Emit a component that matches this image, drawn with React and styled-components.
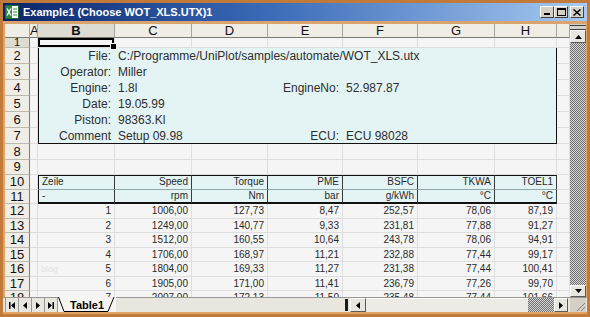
import React from "react";
import styled, { createGlobalStyle } from "styled-components";

const COLS = "25px 8px 77px 77px 76px 75px 75px 77px 62px 13px";
const FONT = `"Liberation Sans", Arial, sans-serif`;

const GlobalStyle = createGlobalStyle`
  body {
    margin: 0;
    background: #ffffff;
    font-family: ${FONT};
  }
`;

const Window = styled.div`
  width: 590px;
  height: 317px;
  box-sizing: border-box;
  border: 3px solid #c27a3a;
  background: #e0a466;
  display: flex;
  flex-direction: column;
  overflow: hidden;
`;

const TitleBar = styled.div`
  height: 18px;
  flex: none;
  display: flex;
  align-items: center;
  padding: 0 3px 0 2px;
  background: linear-gradient(90deg, #0a246a 0%, #3a6ab8 45%, #a6caf0 100%);
`;

const Title = styled.div`
  flex: 1;
  margin-left: 4px;
  color: #ffffff;
  font: bold 11px ${FONT};
  white-space: nowrap;
`;

const WinButton = styled.div`
  width: 14px;
  height: 12px;
  box-sizing: border-box;
  margin-left: ${(p) => p.$gap || 0}px;
  background: #d4d0c8;
  border: 1px solid;
  border-color: #ffffff #404040 #404040 #ffffff;
  display: flex;
  align-items: center;
  justify-content: center;
`;

const FrameStrip = styled.div`
  height: 3px;
  flex: none;
  background: #d9a46e;
`;

const Main = styled.div`
  height: 273px;
  flex: none;
  display: flex;
  padding-left: 2px;
`;

const Sheet = styled.div`
  width: 565px;
  height: 273px;
  overflow: hidden;
  background: #f5f5f5;
  font-family: ${FONT};
`;

const Row = styled.div`
  display: grid;
  grid-template-columns: ${COLS};
  height: ${(p) => p.$h}px;
`;

const ColHead = styled.div`
  box-sizing: border-box;
  border-right: 1px solid #a7a49c;
  border-bottom: 1px solid #7d7a72;
  background: ${(p) => (p.$active ? "#dedbd2" : "#efede6")};
  font-size: 13px;
  font-weight: ${(p) => (p.$active ? "bold" : "normal")};
  color: #111;
  text-align: center;
  line-height: 14px;
  overflow: hidden;
`;

const RowHead = styled.div`
  box-sizing: border-box;
  border-right: 1px solid #7d7a72;
  border-bottom: 1px solid #bdbab2;
  background: ${(p) => (p.$active ? "#dedbd2" : "#efede6")};
  font-size: ${(p) => (p.$h < 12 ? 11 : 13)}px;
  color: #111;
  text-align: center;
  line-height: ${(p) => p.$h - 1}px;
  overflow: hidden;
`;

const GridCell = styled.div`
  position: relative;
  box-sizing: border-box;
  border-right: 1px solid #dedede;
  border-bottom: 1px solid #dedede;
  padding: 0 3px;
  font-size: 10px;
  color: #2a2a2a;
  text-align: ${(p) => p.$align || "right"};
  line-height: ${(p) => p.$h - 1}px;
  white-space: nowrap;
  ${(p) =>
    p.$selected &&
    `
    box-shadow: inset 0 0 0 2px #000;
    &::after {
      content: "";
      position: absolute;
      right: -3px;
      bottom: -3px;
      width: 5px;
      height: 5px;
      background: #000;
      border: 1px solid #f5f5f5;
      z-index: 2;
    }
  `}
`;

const InfoCell = styled.div`
  box-sizing: border-box;
  grid-column: span ${(p) => p.$span || 1};
  background: #e4f4f4;
  border-left: ${(p) => (p.$first ? "1px solid #111" : "none")};
  border-right: ${(p) => (p.$last ? "1px solid #111" : "none")};
  border-bottom: ${(p) => (p.$bottom ? "1px solid #111" : "none")};
  padding: 0 4px 0 3px;
  font-size: 12px;
  color: #2e2e2e;
  text-align: ${(p) => p.$align || "left"};
  line-height: ${(p) => p.$h}px;
  white-space: nowrap;
  overflow: hidden;
`;

const HeadCell = styled.div`
  box-sizing: border-box;
  background: #e4f4f4;
  border-left: ${(p) => (p.$first ? "1px solid #111" : "none")};
  border-right: 1px solid #3a3a3a;
  border-top: ${(p) => (p.$top ? "1px solid #111" : "none")};
  border-bottom: ${(p) => (p.$top ? "1px solid #8fa8a8" : "2px solid #111")};
  padding: 0 3px;
  font-size: 10px;
  color: #2a2a2a;
  text-align: ${(p) => p.$align || "right"};
  line-height: 12px;
  white-space: nowrap;
  overflow: hidden;
`;

const Watermark = styled.span`
  float: left;
  color: #e2e2e2;
  font-size: 9px;
`;

const VScroll = styled.div`
  width: 16px;
  display: flex;
  flex-direction: column;
  background: #d4d0c8;
`;

const SplitBox = styled.div`
  height: 5px;
  flex: none;
  border-top: 1px solid #404040;
  border-bottom: 1px solid #404040;
  box-sizing: border-box;
  margin: 1px 0 0;
`;

const ArrowBtn = styled.div`
  width: ${(p) => p.$w || 16}px;
  height: ${(p) => p.$h || 13}px;
  flex: none;
  box-sizing: border-box;
  background: #e8e6e0;
  border: 1px solid;
  border-color: #ffffff #5a5a5a #5a5a5a #ffffff;
  display: flex;
  align-items: center;
  justify-content: center;
`;

const Dither = styled.div`
  flex: ${(p) => (p.$w ? "none" : 1)};
  width: ${(p) => (p.$w ? `${p.$w}px` : "auto")};
  background: repeating-conic-gradient(#6e6e6e 0 25%, #d8d8d8 0 50%) 0 0 / 2px 2px;
`;

const BottomBar = styled.div`
  height: 15px;
  flex: none;
  display: flex;
  align-items: stretch;
  margin: 0 0 2px;
  padding-left: 2px;
  background: #e8e6df;
  border-top: 1px solid #9a9790;
  box-sizing: border-box;
`;

const NavGroup = styled.div`
  display: flex;
  border-left: 1px solid #9a9790;
`;

const NavBtn = styled.div`
  width: 13px;
  box-sizing: border-box;
  border-right: 1px solid #9a9790;
  display: flex;
  align-items: center;
  justify-content: center;
`;

const Tab = styled.div`
  position: relative;
  width: 58px;
  display: flex;
  align-items: center;
  justify-content: center;
  font: bold 11px ${FONT};
  color: #000;
  background: #f6f5f1;
  margin-top: -1px;
`;

const TabEdge = styled.svg`
  position: absolute;
  top: 0;
  left: 0;
`;

const Spacer = styled.div`
  flex: 1;
`;

const Splitter = styled.div`
  width: 3px;
  background: #1a1a1a;
  margin: 1px 2px 1px 0;
`;

const HThumb = styled.div`
  width: 162px;
  flex: none;
  background: #ecebe6;
  border-top: 1px solid #fff;
`;

const Grip = styled.div`
  width: 16px;
  margin-left: 2px;
  margin-right: 1px;
  background: #d4d0c8;
  display: flex;
  align-items: flex-end;
  justify-content: flex-end;
`;

const Tri = ({ dir }) => {
  const pts = {
    up: "0,4 7,4 3.5,0",
    down: "0,0 7,0 3.5,4",
    left: "4,0 4,7 0,3.5",
    right: "0,0 0,7 4,3.5",
  }[dir];
  const vertical = dir === "up" || dir === "down";
  return (
    <svg width={vertical ? 7 : 4} height={vertical ? 4 : 7}>
      <polygon points={pts} fill="#000" />
    </svg>
  );
};

const ExcelIcon = () => (
  <svg width="14" height="14" viewBox="0 0 14 14">
    <rect x="0.5" y="0.5" width="13" height="13" fill="#ffffff" stroke="#1f6b2d" />
    <rect x="1" y="1" width="6" height="12" fill="#2b8a3e" />
    <path d="M2 3.5 L6 10.5 M6 3.5 L2 10.5" stroke="#fff" strokeWidth="1.4" />
    <path d="M8 4h4M8 7h4M8 10h4" stroke="#2b8a3e" strokeWidth="1" />
  </svg>
);

const colLetters = ["", "A", "B", "C", "D", "E", "F", "G", "H", ""];

const info = [
  { n: 2, label: "File:", value: "C:/Programme/UniPlot/samples/automate/WOT_XLS.utx" },
  { n: 3, label: "Operator:", value: "Miller" },
  { n: 4, label: "Engine:", value: "1.8l", label2: "EngineNo:", value2: "52.987.87" },
  { n: 5, label: "Date:", value: "19.05.99" },
  { n: 6, label: "Piston:", value: "98363.Kl" },
  { n: 7, label: "Comment", value: "Setup 09.98", label2: "ECU:", value2: "ECU 98028" },
];

const heads = ["Zeile", "Speed", "Torque", "PME", "BSFC", "TKWA", "TOEL1"];
const units = ["-", "rpm", "Nm", "bar", "g/kWh", "°C", "°C"];

const data = [
  ["1", "1006,00", "127,73", "8,47", "252,57", "78,06", "87,19"],
  ["2", "1249,00", "140,77", "9,33", "231,81", "77,88", "91,27"],
  ["3", "1512,00", "160,55", "10,64", "243,78", "78,06", "94,91"],
  ["4", "1706,00", "168,97", "11,21", "232,88", "77,44", "99,17"],
  ["5", "1804,00", "169,33", "11,27", "231,38", "77,44", "100,41"],
  ["6", "1905,00", "171,00", "11,41", "236,79", "77,26", "99,70"],
  ["7", "2007,00", "172,13", "11,50", "235,48", "77,44", "101,66"],
];
const dataHeights = [15, 14, 15, 14, 15, 14, 15];

const EmptyRow = ({ n, h, selectB }) => (
  <Row $h={h}>
    <RowHead $h={h} $active={selectB}>{n}</RowHead>
    {Array.from({ length: 9 }).map((_, i) => (
      <GridCell key={i} $h={h} $selected={selectB && i === 1} />
    ))}
  </Row>
);

const InfoRow = ({ row, h, bottom }) => (
  <Row $h={h}>
    <RowHead $h={h}>{row.n}</RowHead>
    <GridCell $h={h} />
    <InfoCell $h={h} $first $bottom={bottom} $align="right">
      {row.label}
    </InfoCell>
    {row.label2 ? (
      <>
        <InfoCell $h={h} $span={2} $bottom={bottom}>{row.value}</InfoCell>
        <InfoCell $h={h} $bottom={bottom} $align="right">{row.label2}</InfoCell>
        <InfoCell $h={h} $span={3} $last $bottom={bottom}>{row.value2}</InfoCell>
      </>
    ) : (
      <InfoCell $h={h} $span={6} $last $bottom={bottom}>{row.value}</InfoCell>
    )}
    <GridCell $h={h} />
  </Row>
);

const HeadRow = ({ n, h, cells, top }) => (
  <Row $h={h}>
    <RowHead $h={h}>{n}</RowHead>
    <GridCell $h={h} />
    {cells.map((c, i) => (
      <HeadCell key={i} $first={i === 0} $top={top} $align={i === 0 ? "left" : "right"}>
        {c}
      </HeadCell>
    ))}
    <GridCell $h={h} />
  </Row>
);

const DataRow = ({ n, h, cells, mark }) => (
  <Row $h={h}>
    <RowHead $h={h}>{n}</RowHead>
    <GridCell $h={h} />
    {cells.map((c, i) => (
      <GridCell key={i} $h={h}>
        {i === 0 && mark ? <Watermark>{mark}</Watermark> : null}
        {c}
      </GridCell>
    ))}
    <GridCell $h={h} />
  </Row>
);

export default function App() {
  return (
    <>
      <GlobalStyle />
      <Window>
        <TitleBar>
          <ExcelIcon />
          <Title>Example1 (Choose WOT_XLS.UTX)1</Title>
          <WinButton>
            <svg width="6" height="6"><rect x="0" y="4" width="6" height="2" fill="#000" /></svg>
          </WinButton>
          <WinButton>
            <svg width="9" height="8">
              <rect x="0.5" y="0.5" width="8" height="7" fill="none" stroke="#000" />
              <rect x="0" y="0" width="9" height="2" fill="#000" />
            </svg>
          </WinButton>
          <WinButton $gap={2}>
            <svg width="8" height="7">
              <path d="M0.5 0.5 L7.5 6.5 M7.5 0.5 L0.5 6.5" stroke="#000" strokeWidth="1.5" />
            </svg>
          </WinButton>
        </TitleBar>
        <FrameStrip />
        <Main>
          <Sheet>
            <Row $h={14}>
              {colLetters.map((c, i) => (
                <ColHead key={i} $active={c === "B"}>{c}</ColHead>
              ))}
            </Row>
            <EmptyRow n={1} h={10} selectB />
            {info.map((r, i) => (
              <InfoRow key={r.n} row={r} h={16} bottom={i === info.length - 1} />
            ))}
            <EmptyRow n={8} h={16} />
            <EmptyRow n={9} h={15} />
            <HeadRow n={10} h={15} cells={heads} top />
            <HeadRow n={11} h={14} cells={units} />
            {data.map((r, i) => (
              <DataRow
                key={i}
                n={12 + i}
                h={dataHeights[i]}
                cells={r}
                mark={i === 4 ? "blog" : null}
              />
            ))}
          </Sheet>
          <VScroll>
            <SplitBox />
            <ArrowBtn><Tri dir="up" /></ArrowBtn>
            <Dither />
            <ArrowBtn $h={12}><Tri dir="down" /></ArrowBtn>
          </VScroll>
        </Main>
        <BottomBar>
          <NavGroup>
            <NavBtn>
              <svg width="6" height="7"><rect x="0" y="0" width="1.5" height="7" fill="#000" /><polygon points="6,0 6,7 2,3.5" fill="#000" /></svg>
            </NavBtn>
            <NavBtn><Tri dir="left" /></NavBtn>
            <NavBtn><Tri dir="right" /></NavBtn>
            <NavBtn>
              <svg width="6" height="7"><polygon points="0,0 0,7 4,3.5" fill="#000" /><rect x="4.5" y="0" width="1.5" height="7" fill="#000" /></svg>
            </NavBtn>
          </NavGroup>
          <Tab>
            <TabEdge width="58" height="15">
              <path d="M0.5 0 L6 14.5 L50 14.5 L56 0" fill="none" stroke="#000" />
            </TabEdge>
            Table1
          </Tab>
          <Spacer />
          <Splitter />
          <ArrowBtn $w={16} $h={14}><Tri dir="left" /></ArrowBtn>
          <HThumb />
          <Dither $w={26} />
          <ArrowBtn $w={14} $h={14}><Tri dir="right" /></ArrowBtn>
          <Grip>
            <svg width="12" height="12">
              <path d="M11 3 L3 11 M11 7 L7 11" stroke="#808080" strokeWidth="1" />
            </svg>
          </Grip>
        </BottomBar>
      </Window>
    </>
  );
}
